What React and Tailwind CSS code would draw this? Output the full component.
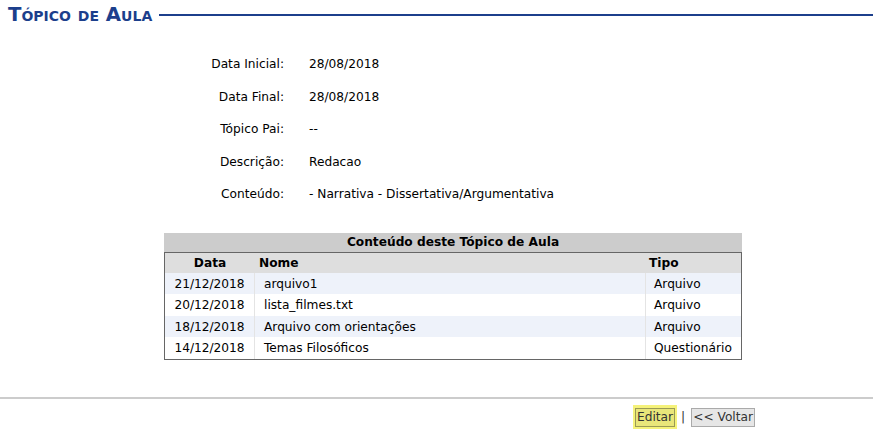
export default function App() {
  const rows = [
    { data: "21/12/2018", nome: "arquivo1", tipo: "Arquivo" },
    { data: "20/12/2018", nome: "lista_filmes.txt", tipo: "Arquivo" },
    { data: "18/12/2018", nome: "Arquivo com orientações", tipo: "Arquivo" },
    { data: "14/12/2018", nome: "Temas Filosóficos", tipo: "Questionário" },
  ];
  const campos = [
    ["Data Inicial:", "28/08/2018"],
    ["Data Final:", "28/08/2018"],
    ["Tópico Pai:", "--"],
    ["Descrição:", "Redacao"],
    ["Conteúdo:", "- Narrativa - Dissertativa/Argumentativa"],
  ];

  return (
    <div className="w-[873px] h-[429px] bg-white text-black text-[12.2px] font-['DejaVu_Sans',sans-serif] overflow-hidden">
      {/* titulo */}
      <div className="flex items-end pl-[8px] h-[26px]">
        <h2 className="text-[19.7px] font-bold text-[#1c3f8c] [font-variant:small-caps] leading-[20px] pb-[1px]">
          Tópico de Aula
        </h2>
        <div className="flex-1 ml-[7px] mb-[10px] h-[2px] bg-[#1c3f8c]" />
      </div>

      {/* dados */}
      <div className="mt-[22px] grid grid-cols-[284px_1fr] gap-x-[25px]">
        {campos.map(([label, valor]) => (
          <div key={label} className="contents">
            <div className="text-right h-[32.5px] leading-[32.5px]">{label}</div>
            <div className="h-[32.5px] leading-[32.5px]">{valor}</div>
          </div>
        ))}
      </div>

      {/* tabela */}
      <div className="ml-[164px] mt-[22px] w-[578px]">
        <div className="h-[19px] bg-[#cccccc] text-center font-bold leading-[19px]">
          Conteúdo deste Tópico de Aula
        </div>
        <div className="border border-[#666666]">
          <div className="flex h-[20px] leading-[20px] bg-[#dedede] font-bold">
            <div className="w-[90px] text-center">Data</div>
            <div className="w-[391px] pl-[4px]">Nome</div>
            <div className="flex-1 pl-[3px]">Tipo</div>
          </div>
          {rows.map((r, i) => (
            <div
              key={r.data}
              className={`flex h-[21.5px] leading-[22px] ${i % 2 === 0 ? "bg-[#eef2fa]" : "bg-white"}`}
            >
              <div className="w-[90px] text-center border-r border-[#e4e4e4]">{r.data}</div>
              <div className="w-[391px] pl-[9px] border-r border-[#e4e4e4]">{r.nome}</div>
              <div className="flex-1 pl-[8px]">{r.tipo}</div>
            </div>
          ))}
        </div>
      </div>

      {/* rodape */}
      <div className="mt-[37px] h-[2px] bg-[#cccccc]" />
      <div className="flex items-center mt-[6px] pl-[633px]">
        <div className="bg-[#f5f27a] px-[2px] py-[3px]">
          <button className="px-[1px] h-[19px] leading-[17px] border border-[#9a9a55] bg-[#e9e67a] text-[#333]">
            Editar
          </button>
        </div>
        <span className="ml-[4px] mr-[6px] text-[#333]">|</span>
        <button className="px-[1px] h-[19px] leading-[17px] border border-[#aaaaaa] bg-[#e6e6e6] text-[#333]">
          &lt;&lt; Voltar
        </button>
      </div>
    </div>
  );
}
